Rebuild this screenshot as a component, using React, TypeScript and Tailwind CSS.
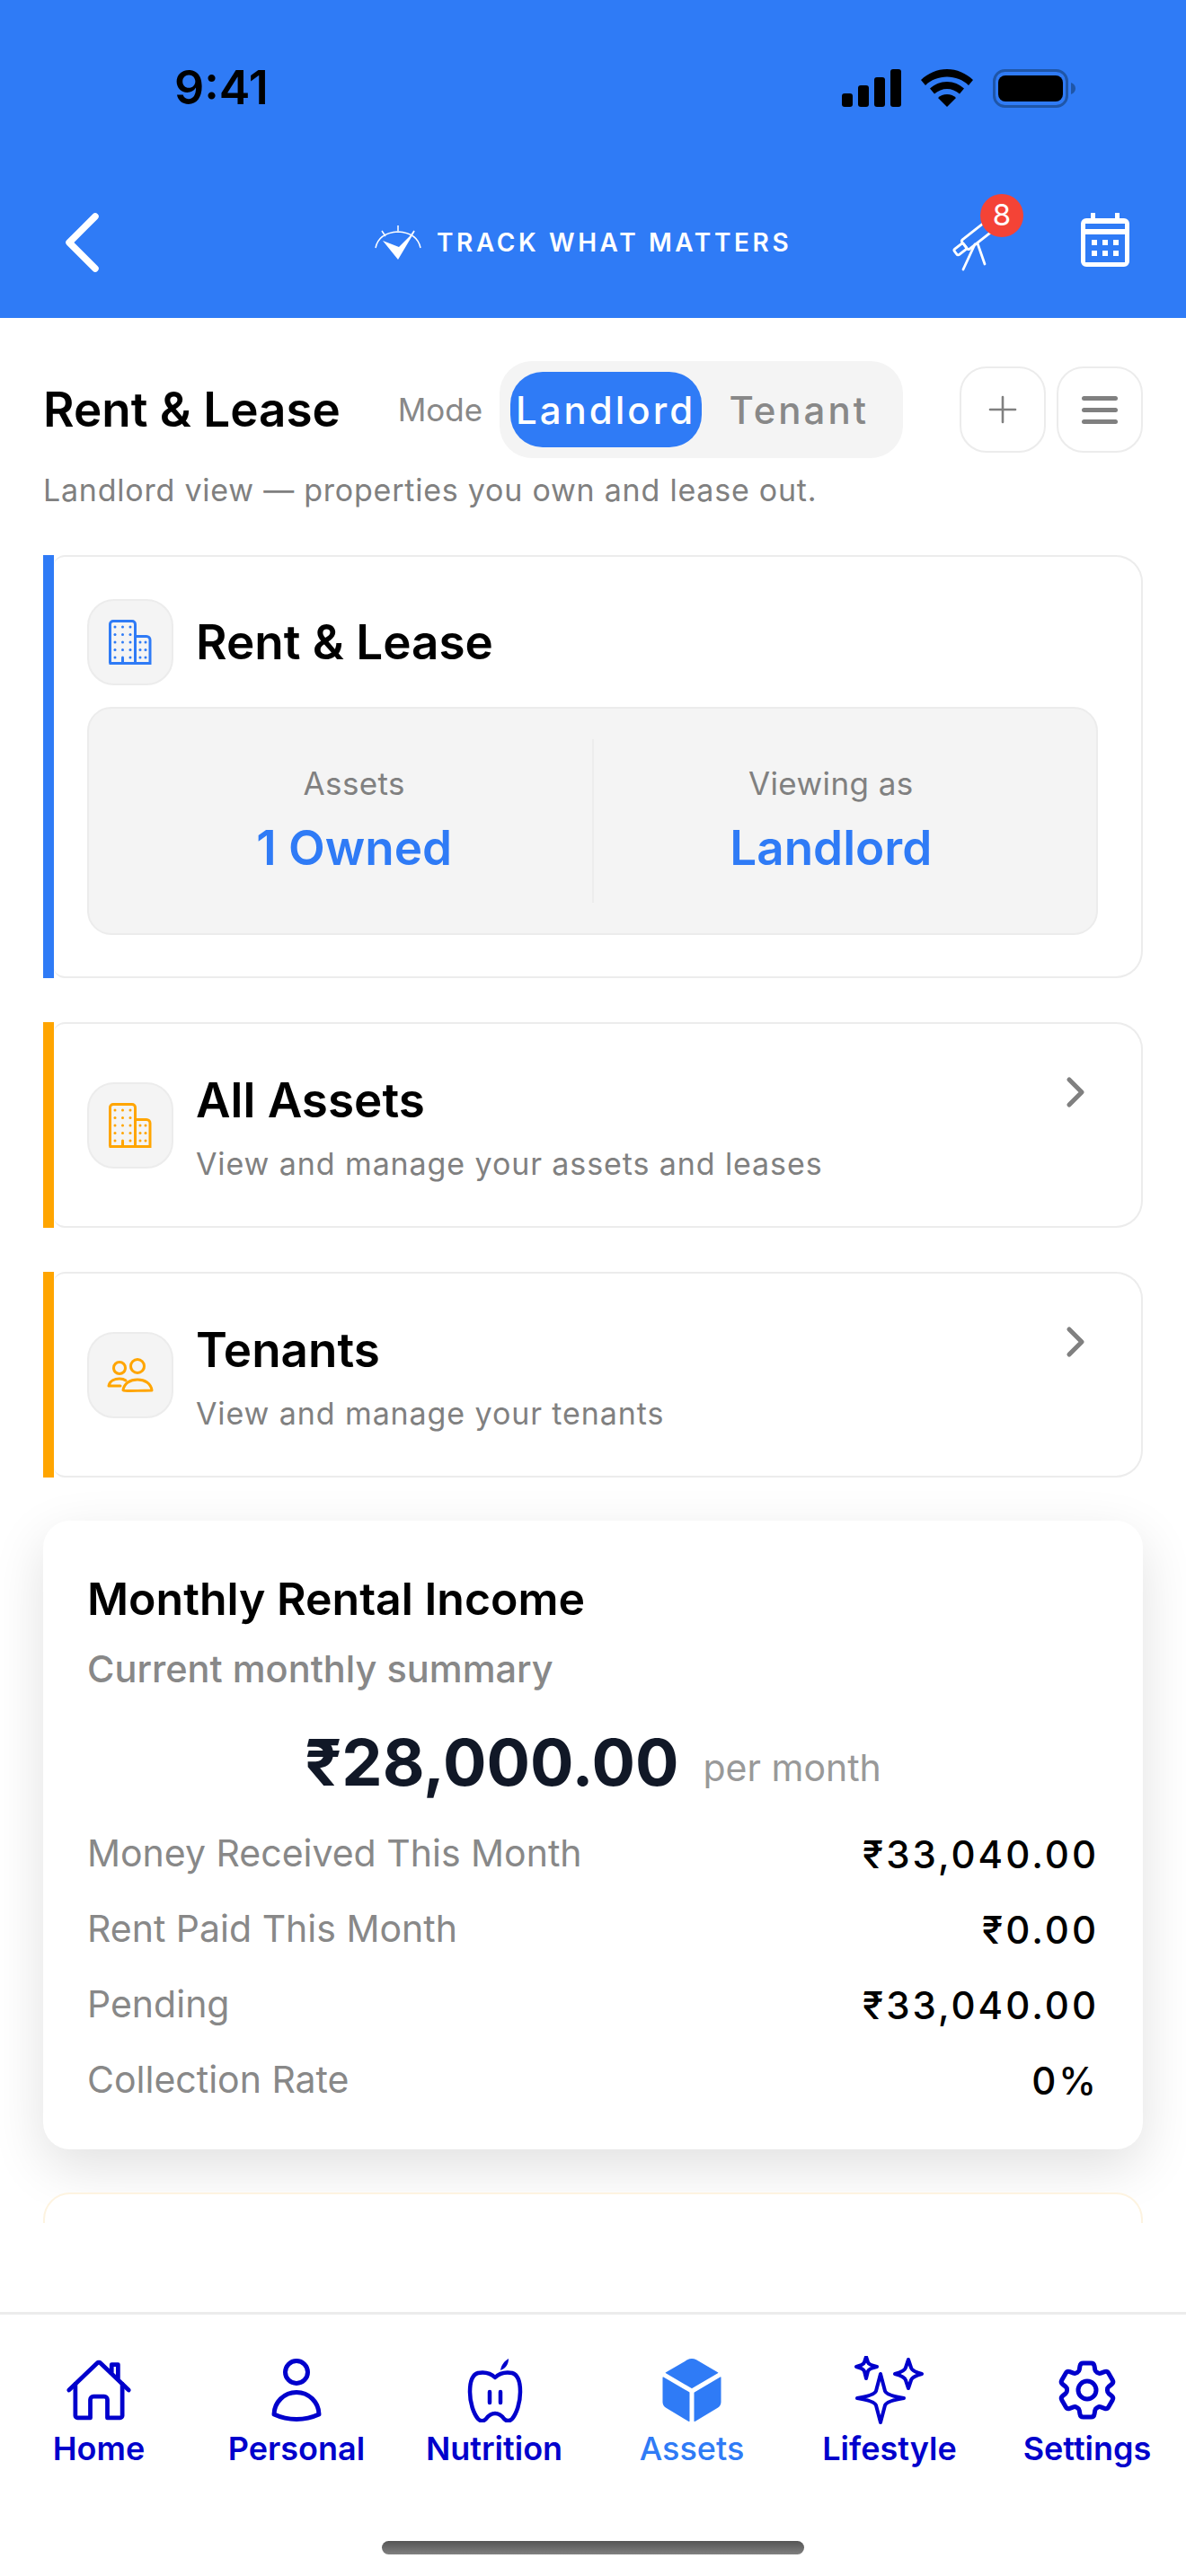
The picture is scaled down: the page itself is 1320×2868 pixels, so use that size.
import { ChevronRight, Plus } from 'lucide-react'
import { HiOutlineCog6Tooth, HiOutlineUser } from 'react-icons/hi2'
import { IoCube, IoHomeOutline } from 'react-icons/io5'

function SignalIcon() {
  return (
    <svg width="66" height="42" viewBox="0 0 66 42" fill="#000">
      <rect x="0" y="27" width="12" height="15" rx="3" />
      <rect x="18" y="18" width="12" height="24" rx="3" />
      <rect x="36" y="9" width="12" height="33" rx="3" />
      <rect x="54" y="0" width="12" height="42" rx="3" />
    </svg>
  )
}

function WifiIcon() {
  return (
    <svg width="58" height="42" viewBox="0 0 58 42" fill="#000">
      <path d="M29 0C18 0 8 4.500 0 12l5 6C11 12 20 8.500 29 8.500S47 12 53 18l5-6C50 4.500 40 0 29 0z" />
      <path d="M29 14c-7.500 0-14 3-19 7.500l5 6C19 24 24 22 29 22s10 2 14 5.500l5-6C43 17 36.500 14 29 14z" />
      <path d="M29 28c-4 0-7.500 1.500-10 4l10 10 10-10c-2.500-2.500-6-4-10-4z" />
    </svg>
  )
}

function BatteryIcon() {
  return (
    <svg width="93" height="43" viewBox="0 0 93 43">
      <rect x="1.500" y="1.500" width="81" height="40" rx="12" fill="none" stroke="#1f56a8" strokeWidth="3" />
      <rect x="6" y="7" width="72" height="29" rx="8" fill="#000" />
      <path d="M87 15c3 1 5 3.500 5 6.500s-2 5.500-5 6.500z" fill="#1f56a8" />
    </svg>
  )
}

function BrandMark() {
  return (
    <svg width="52" height="38" viewBox="0 0 52 38" fill="none" stroke="#fff">
      <path d="M1 25C3 15 10 8 26 7C42 8 49 15 51 25" strokeWidth="1.500" />
      <path d="M26 0v6M8 6l4 6M44 6l-4 6" strokeWidth="1.500" />
      <path d="M9 17l17 21L45 6 27 24z" fill="#fff" stroke="none" />
    </svg>
  )
}

function TelescopeIcon() {
  return (
    <svg width="62" height="62" viewBox="0 0 62 62" fill="none" stroke="#fff" strokeWidth="2.800" strokeLinecap="round" strokeLinejoin="round">
      <g transform="rotate(-38 22 26)">
        <rect x="0" y="22" width="13" height="8" rx="2" />
        <rect x="13" y="19" width="38" height="13" rx="2" />
      </g>
      <path d="M26 30L13 58M29 29L37 52" />
    </svg>
  )
}

function CalendarIcon() {
  return (
    <svg width="54" height="60" viewBox="0 0 54 60" fill="#fff">
      <rect x="11" y="0" width="5" height="8" />
      <rect x="38" y="0" width="5" height="8" />
      <path
        fillRule="evenodd"
        d="M6 6h42a6 6 0 0 1 6 6v42a6 6 0 0 1-6 6H6a6 6 0 0 1-6-6V12a6 6 0 0 1 6-6zM5 12v6h44v-6zM5 24v31h44V24z"
      />
      <rect x="12" y="30" width="6" height="6" />
      <rect x="24" y="30" width="6" height="6" />
      <rect x="36" y="30" width="6" height="6" />
      <rect x="12" y="42" width="6" height="6" />
      <rect x="24" y="42" width="6" height="6" />
      <rect x="36" y="42" width="6" height="6" />
    </svg>
  )
}

function BuildingIcon({ color }: { color: string }) {
  const tallX = [7, 15.500, 24]
  const tallY = [8, 16.500, 25, 33.500, 42]
  const lowY = [25, 33.500, 42]
  return (
    <svg width="48" height="50" viewBox="0 0 48 50" fill="none">
      <path
        d="M1.500 48.500V5a3.500 3.500 0 0 1 3.500-3.500h21A3.500 3.500 0 0 1 29.500 5v43.500M29.500 18.500H42a4 4 0 0 1 4 4v26M.5 48.500h47M15.500 48.500v-6"
        stroke={color}
        strokeWidth="3"
        strokeLinejoin="round"
      />
      {tallX.map((x) =>
        tallY.map((y) => <circle key={`${x}-${y}`} cx={x} cy={y} r="1.500" fill={color} />),
      )}
      {[35, 41].map((x) => lowY.map((y) => <circle key={`${x}-${y}`} cx={x} cy={y} r="1.500" fill={color} />))}
    </svg>
  )
}

function PeopleIcon({ color }: { color: string }) {
  return (
    <svg width="52" height="38" viewBox="0 0 52 38" fill="none" stroke={color} strokeWidth="3">
      <circle cx="14" cy="11" r="6.500" />
      <circle cx="34" cy="9" r="7.500" />
      <path d="M2 31c1-6 7-8 12-8 3 0 5 .5 7 2M2 31h13" strokeLinecap="round" />
      <path d="M18 36c1-8 8-12 16-12s15 4 16 12c0 0-32 1-32 0z" strokeLinejoin="round" />
    </svg>
  )
}

function AppleIcon() {
  return (
    <svg width="72" height="72" viewBox="0 0 72 72" fill="none" stroke="#0000cc" strokeWidth="4.500">
      <path
        d="M37 22C32 17 24 16 18 17C11 19 9 27 9 38C9 50 13 62 18 68C21 71 24 71 27 68C30 64 34 62 37 62C40 62 44 64 47 68C50 71 53 71 56 68C61 62 65 50 65 38C65 27 63 19 56 17C50 16 42 17 37 22Z"
        strokeLinejoin="round"
      />
      <path d="M43 14C44 8 47 4 52 1C52 7 49 12 43 14Z" fill="#0000cc" stroke="none" />
      <path d="M31 38v12M43 38v12" strokeLinecap="round" />
    </svg>
  )
}

function SparkleIcon() {
  return (
    <svg width="78" height="76" viewBox="0 0 78 76" fill="none" stroke="#0000cc" strokeWidth="4" strokeLinejoin="round">
      <path d="M29 20L34 39Q36 44 55 47Q36 50 34 55L29 74L24 55Q22 50 3 47Q22 44 24 39Z" />
      <path d="M13 1L15 7Q16 10 25 12Q16 14 15 17L13 25L11 17Q10 14 2 12Q10 10 11 7Z" />
      <path d="M60 4L63 13Q64 17 75 20Q64 23 63 27L60 36L57 27Q56 23 45 20Q56 17 57 13Z" />
    </svg>
  )
}

const tabs = [
  { label: 'Home', icon: <IoHomeOutline size={76} /> },
  { label: 'Personal', icon: <HiOutlineUser size={80} /> },
  { label: 'Nutrition', icon: <AppleIcon /> },
  { label: 'Assets', icon: <IoCube size={80} />, active: true },
  { label: 'Lifestyle', icon: <SparkleIcon /> },
  { label: 'Settings', icon: <HiOutlineCog6Tooth size={80} /> },
]

const rows = [
  { label: 'Money Received This Month', value: '₹33,040.00' },
  { label: 'Rent Paid This Month', value: '₹0.00' },
  { label: 'Pending', value: '₹33,040.00' },
  { label: 'Collection Rate', value: '0%' },
]

function IconBox({ children }: { children: React.ReactNode }) {
  return (
    <div className="flex h-[96px] w-[96px] shrink-0 items-center justify-center rounded-[30px] border-[2px] border-[#ececec] bg-[#f4f4f4]">
      {children}
    </div>
  )
}

function LinkCard({ title, subtitle, icon }: { title: string; subtitle: string; icon: React.ReactNode }) {
  return (
    <div className="flex h-[229px] shrink-0">
      <div className="w-[12px] shrink-0 bg-[#ffa500]" />
      <div className="flex flex-1 items-start rounded-l-[12px] rounded-r-[30px] border-y-[2px] border-r-[2px] border-[#ececec] bg-white pl-[37px] pr-[63px] pt-[50px]">
        <div className="mt-[15px]">
          <IconBox>{icon}</IconBox>
        </div>
        <div className="ml-[25px] mt-[2px] flex-1">
          <div className="text-[53px] font-semibold leading-[66px] text-black">{title}</div>
          <div className="mt-[14px] text-[34px] leading-[48px] tracking-[0.9px] text-[#808080]">{subtitle}</div>
        </div>
        <ChevronRight size={56} strokeWidth={2.2} className="-mr-[18px] mt-[-2px] text-[#808080]" />
      </div>
    </div>
  )
}

export default function App() {
  return (
    <div className="flex h-[2868px] w-[1320px] flex-col overflow-hidden bg-white [font-family:Inter,sans-serif]">
      {/* Header */}
      <header className="h-[354px] shrink-0 bg-[#2f7bf6] pt-[60px]">
        <div className="flex h-[76px] items-center justify-between pl-[194px] pr-[122px]">
          <span className="text-[52px] font-semibold leading-none text-black">9:41</span>
          <div className="flex items-center gap-[22px]">
            <SignalIcon />
            <WifiIcon />
            <BatteryIcon />
          </div>
        </div>
        <div className="mt-[84px] flex h-[100px] items-center pl-[72px] pr-[63px]">
          <svg width="38" height="66" viewBox="0 0 38 66" fill="none" stroke="#fff" strokeWidth="7.500" strokeLinecap="round" strokeLinejoin="round">
            <path d="M34 4L5 33L34 62" />
          </svg>
          <div className="ml-[307px] flex items-center gap-[17px]">
            <BrandMark />
            <span className="text-[28px] font-semibold tracking-[3.600px] text-white">TRACK WHAT MATTERS</span>
          </div>
          <div className="relative ml-auto mr-[82px] mt-[6px]">
            <TelescopeIcon />
            <span className="absolute -right-[18px] -top-[26px] flex h-[48px] w-[48px] items-center justify-center rounded-full bg-[#f44336] text-[33px] text-white">
              8
            </span>
          </div>
          <div className="-mt-[6px]">
            <CalendarIcon />
          </div>
        </div>
      </header>

      {/* Content */}
      <main className="flex h-[2121px] shrink-0 flex-col overflow-hidden px-[48px] pt-[48px]">
        <div className="flex h-[108px] shrink-0 items-center">
          <h1 className="mt-[2px] w-[395px] text-[53px] font-semibold text-black">Rent &amp; Lease</h1>
          <span className="w-[113px] text-[35px] text-[#888888]">Mode</span>
          <div className="flex h-[108px] w-[450px] items-center rounded-[36px] bg-[#f4f4f4] px-[12px]">
            <div className="flex h-[84px] w-[213px] items-center justify-center rounded-[36px] bg-[#2f7bf6] text-[42px] font-medium tracking-[3px] text-white">
              Landlord
            </div>
            <div className="ml-[31px] text-[42px] font-medium tracking-[3px] text-[#888888]">Tenant</div>
          </div>
          <button className="ml-[63px] flex h-[96px] w-[96px] items-center justify-center rounded-[30px] border-[2px] border-[#ececec] bg-white">
            <Plus size={48} strokeWidth={1.300} className="text-[#808080]" />
          </button>
          <button className="ml-[12px] flex h-[96px] w-[96px] flex-col items-center justify-center gap-[8px] rounded-[30px] border-[2px] border-[#ececec] bg-white">
            <span className="h-[5px] w-[40px] rounded-full bg-[#808080]" />
            <span className="h-[5px] w-[40px] rounded-full bg-[#808080]" />
            <span className="h-[5px] w-[40px] rounded-full bg-[#808080]" />
          </button>
        </div>
        <p className="mt-[12px] h-[48px] shrink-0 text-[34px] leading-[48px] tracking-[0.770px] text-[#808080]">
          Landlord view — properties you own and lease out.
        </p>

        {/* Summary card */}
        <div className="mt-[48px] flex h-[471px] shrink-0">
          <div className="w-[12px] shrink-0 bg-[#2f7bf6]" />
          <div className="flex-1 rounded-l-[12px] rounded-r-[30px] border-y-[2px] border-r-[2px] border-[#ececec] bg-white pl-[37px] pr-[48px] pt-[47px]">
            <div className="flex items-center gap-[25px]">
              <IconBox>
                <BuildingIcon color="#2f7bf6" />
              </IconBox>
              <span className="mt-[2px] text-[53px] font-semibold text-black">Rent &amp; Lease</span>
            </div>
            <div className="mt-[24px] flex h-[254px] rounded-[27px] border-[2px] border-[#ececec] bg-[#f4f4f4] px-[31px] py-[34px]">
              <div className="flex flex-1 flex-col items-center justify-center">
                <span className="text-[35px] leading-[48px] tracking-[0.4px] text-[#808080]">Assets</span>
                <span className="mt-[12px] text-[53px] font-semibold leading-[72px] text-[#2f7bf6]">1 Owned</span>
              </div>
              <div className="w-[2px] bg-[#ececec]" />
              <div className="flex flex-1 flex-col items-center justify-center">
                <span className="text-[35px] leading-[48px] tracking-[0.4px] text-[#808080]">Viewing as</span>
                <span className="mt-[12px] text-[53px] font-semibold leading-[72px] text-[#2f7bf6]">Landlord</span>
              </div>
            </div>
          </div>
        </div>

        <div className="mt-[49px] shrink-0">
          <LinkCard title="All Assets" subtitle="View and manage your assets and leases" icon={<BuildingIcon color="#ffa500" />} />
        </div>
        <div className="mt-[49px] shrink-0">
          <LinkCard title="Tenants" subtitle="View and manage your tenants" icon={<PeopleIcon color="#ffa500" />} />
        </div>

        {/* Monthly income */}
        <div className="mt-[48px] h-[700px] shrink-0 rounded-[30px] bg-white px-[49px] pt-[57px] shadow-[0_20px_60px_rgba(0,0,0,0.12)]">
          <div className="text-[50px] font-semibold leading-[60px] text-black">Monthly Rental Income</div>
          <div className="mt-[20px] text-[41.500px] font-medium leading-[56px] text-[#888888]">Current monthly summary</div>
          <div className="mt-[34px] flex h-[84px] items-baseline justify-center gap-[27px]">
            <span className="text-[72px] font-bold leading-[84px] text-[#111827]">₹28,000.00</span>
            <span className="-translate-y-[5px] text-[41px] leading-[56px] text-[#999999]">per month</span>
          </div>
          <div className="mt-[18px]">
            {rows.map((row) => (
              <div key={row.label} className="flex h-[84px] items-center justify-between">
                <span className="text-[41px] text-[#888888]">{row.label}</span>
                <span className="text-[42px] font-medium tracking-[3px] text-black">{row.value}</span>
              </div>
            ))}
          </div>
        </div>

        <div className="mt-[48px] h-[300px] shrink-0 rounded-[30px] border-[2px] border-[#fdf3e0] bg-white" />
      </main>

      {/* Bottom tabs */}
      <nav className="mt-[99px] flex flex-1 flex-col border-t-[3px] border-[#ececec] bg-white">
        <div className="grid grid-cols-6 pt-[46px]">
          {tabs.map((tab) => (
            <div key={tab.label} className={`flex flex-col items-center ${tab.active ? 'text-[#2f7bf6]' : 'text-[#0000cc]'}`}>
              <div className="flex h-[76px] items-center justify-center">{tab.icon}</div>
              <span className={`mt-[5px] text-[36px] leading-[44px] ${tab.active ? 'font-medium' : 'font-semibold'}`}>
                {tab.label}
              </span>
            </div>
          ))}
        </div>
        <div className="mx-auto mb-[24px] mt-auto h-[15px] w-[470px] rounded-full bg-gradient-to-b from-[#555555] to-[#808080]" />
      </nav>
    </div>
  )
}
